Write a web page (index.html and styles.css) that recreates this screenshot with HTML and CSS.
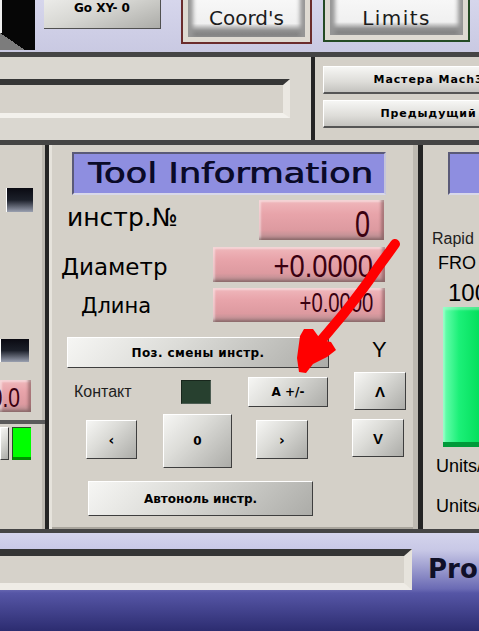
FILE: index.html
```html
<!DOCTYPE html>
<html lang="ru">
<head>
    <meta charset="UTF-8">
    <meta name="viewport" content="width=device-width, initial-scale=1.0">
    <title>Mach3 - Tool Information</title>
    <link rel="stylesheet" href="styles.css">
</head>
<body>

<div class="screen">
    <!-- verxnyaya polosa s knopkami -->
    <div class="top-strip">
        <div class="corner-btn"></div>
        <div class="go-btn">Go XY- 0</div>
        <div class="big-btn big-red">
            <div class="big-face"><span class="upper">Machine</span><span>Coord's</span></div>
        </div>
        <div class="big-btn big-green">
            <div class="big-face"><span class="upper">Soft</span><span class="wide">Limits</span></div>
        </div>
    </div>
    <div class="hbar"></div>

    <div class="mid-strip">
        <div class="mid-left"><div class="inset-field"></div></div>
        <div class="vbar"></div>
        <div class="mid-right">
            <div class="wiz-btn">Мастера Mach3</div>
            <div class="wiz-btn">Предыдущий</div>
        </div>
    </div>
    <div class="hbar"></div>

    <div class="main-row">
        <div class="side-left">
            <div class="side-left-top">
                <div class="led-black led-a"></div>
                <div class="led-black led-b"></div>
                <div class="dro dro-side"><span>0.0</span></div>
            </div>
            <div class="side-left-bottom">
                <div class="btn stub-btn"></div>
                <div class="led-green"></div>
            </div>
        </div>
        <div class="vbar"></div>

        <div class="tool-panel">
            <div class="title-box"><span>Tool Information</span></div>

            <div class="row row-1">
                <div class="lbl lbl-1">инстр.№</div>
                <div class="dro dro-1"><span>0</span></div>
            </div>
            <div class="row row-2">
                <div class="lbl lbl-2">Диаметр</div>
                <div class="dro dro-2"><span>+0.0000</span></div>
            </div>
            <div class="row row-3">
                <div class="lbl lbl-3">Длина</div>
                <div class="dro dro-3"><span>+0.0000</span></div>
            </div>

            <div class="row row-4">
                <div class="btn btn-pos">Поз. смены инстр.</div>
                <div class="axis-y">Y</div>
            </div>
            <div class="row row-5">
                <div class="contact-lbl">Контакт</div>
                <div class="led-contact"></div>
                <div class="btn btn-sign">A +/-</div>
                <div class="btn btn-up">Λ</div>
            </div>
            <div class="row row-6">
                <div class="btn btn-left">‹</div>
                <div class="btn btn-zero">0</div>
                <div class="btn btn-right">›</div>
                <div class="btn btn-down">V</div>
            </div>
            <div class="row row-7">
                <div class="btn btn-auto">Автоноль инстр.</div>
            </div>
        </div>

        <div class="vbar vbar-wide"></div>
        <div class="side-right">
            <div class="title-box title-stub"></div>
            <div class="rapid">Rapid</div>
            <div class="fro">FRO</div>
            <div class="fro-val">100</div>
            <div class="fro-bar"></div>
            <div class="units units-1">Units/</div>
            <div class="units units-2">Units/</div>
        </div>
    </div>
    <div class="hbar hbar-thin"></div>

    <div class="bottom">
        <div class="status-field"></div>
        <div class="pro">Pro</div>
    </div>

    <!-- krasnaya strelka poverx vsego -->
    <svg class="arrow" width="479" height="631" viewBox="0 0 479 631">
        <path d="M395 244 C388 254 380 264 372 276 C364 288 355 299 345 312 C337 322 329 331 318 344" fill="none" stroke="#ff0000" stroke-width="10" stroke-linecap="round"/>
        <polygon points="300,336 304,329 313,329 321,340 331,342 336,350 327,357 313,364 306,373 299,372 297,358" fill="#ff0000"/>
    </svg>
</div>

</body>
</html>
```

FILE: styles.css
```css
/* Obshchee */
* {
    box-sizing: border-box;
}
body {
    margin: 0;
    background-color: #d4d0c8;
    font-family: "DejaVu Sans", Verdana, sans-serif;
    color: #000;
    overflow: hidden;
}
.screen {
    position: relative;
    width: 479px;
    height: 631px;
    overflow: hidden;
}

/* Verxnyaya polosa */
.top-strip {
    display: flex;
    align-items: flex-start;
    height: 52px;
    overflow: hidden;
    background: linear-gradient(#d6d6ec, #c9c9e2);
}
.corner-btn {
    position: relative;
    width: 35px;
    height: 50px;
    margin-right: 9px;
    background-color: #060606;
}
.corner-btn::before {
    content: "";
    position: absolute;
    left: 0;
    top: 0;
    width: 2px;
    height: 33px;
    background-color: #eeeeee;
}
.corner-btn::after {
    content: "";
    position: absolute;
    left: 0;
    bottom: 0;
    width: 25px;
    height: 17px;
    background: linear-gradient(to top right, #7c7c7c 50%, transparent 50%);
}
.go-btn {
    width: 117px;
    height: 42px;
    margin-top: -13px;
    display: flex;
    align-items: center;
    justify-content: center;
    font-size: 12px;
    font-weight: bold;
    background: linear-gradient(160deg, #f4f4f2, #d8d8d4 50%, #acaca8);
    border-right: 1px solid #505050;
    border-bottom: 1px solid #505050;
}
.big-btn {
    height: 74px;
    margin-top: -30px;
    padding: 4px 5px 5px;
    background-color: #dedad2;
    border: 2px solid #6b2c2c;
}
.big-red {
    width: 131px;
    margin-left: 20px;
}
.big-green {
    width: 147px;
    height: 72px;
    margin-left: 11px;
    border-color: #244a24;
}
.big-face {
    height: 100%;
    padding-top: 4px;
    display: flex;
    flex-direction: column;
    align-items: center;
    font-size: 20px;
    line-height: 23px;
    color: #1c1c1c;
    background: linear-gradient(#b8b8b8, #f8f8f8 35%, #f0f0f0 78%, #949494 89%, #747474);
    box-shadow: inset 5px 0 4px #969696, inset -5px 0 4px #969696;
}
.big-face .upper {
    margin-bottom: 4px;
    color: #606060;
}
.big-face .wide {
    letter-spacing: 1.4px;
}
.hbar {
    height: 5px;
    background-color: #454545;
}
.hbar-thin {
    height: 4px;
}

/* Srednyaya polosa */
.mid-strip {
    display: flex;
    height: 83px;
}
.mid-left {
    width: 311px;
    padding-top: 22px;
    background-color: #dad7d0;
}
.inset-field {
    width: 290px;
    height: 39px;
    background-color: #d6d2ca;
    border-top: 6px solid #363636;
    border-right: 7px solid #ebe8e2;
    border-bottom: 5px solid #f3f1ec;
}
.vbar {
    width: 4px;
    background-color: #242424;
}
.vbar-wide {
    width: 5px;
}
.mid-right {
    flex: 1;
    padding: 9px 0 0 8px;
    display: flex;
    flex-direction: column;
    gap: 6px;
    overflow: hidden;
}
.wiz-btn {
    flex: none;
    width: 210px;
    height: 28px;
    display: flex;
    align-items: center;
    justify-content: center;
    font-size: 11px;
    font-weight: bold;
    letter-spacing: 0.9px;
    background: linear-gradient(#f6f6f4, #dddcd8 60%, #c4c3bf);
    border-top: 1px solid #ffffff;
    border-left: 1px solid #ffffff;
    border-bottom: 2px solid #555555;
}

/* Osnovnaya chast' */
.main-row {
    display: flex;
    height: 384px;
}
.side-left {
    width: 45px;
    display: flex;
    flex-direction: column;
    box-shadow: inset -3px 0 #bdb9b1;
}
.side-left-top {
    height: 275px;
    padding-top: 43px;
}
.led-black {
    border-left: 1px solid #ffffff;
    background: linear-gradient(#0a0a12, #1c202a 50%, #9aa0b0);
}
.led-a {
    width: 27px;
    height: 24px;
    margin-left: 6px;
}
.led-b {
    width: 29px;
    height: 23px;
    margin-top: 127px;
}
.side-left-bottom {
    flex: 1;
    display: flex;
    align-items: flex-start;
    gap: 3px;
    padding-top: 3px;
    border-top: 4px solid #5a5a5a;
}
.stub-btn {
    width: 9px;
    height: 33px;
}
.led-green {
    width: 19px;
    height: 33px;
    background-color: #00ff00;
    border-top: 1px solid #2a4a2a;
    border-left: 1px solid #2a4a2a;
    border-bottom: 3px solid #009000;
}

/* Krasnye polya */
.dro {
    display: flex;
    justify-content: flex-end;
    align-items: flex-start;
    overflow: hidden;
    font-family: "Liberation Sans", Arial, sans-serif;
    color: #3a0010;
    background: linear-gradient(#f0b8bc, #e8a4aa 35%, #dd9aa0 75%, #b08c8e);
    box-shadow: inset -3px -2px 3px rgba(90, 60, 60, 0.45), inset 2px 2px 2px rgba(255, 255, 255, 0.45);
}
.dro span {
    display: inline-block;
    white-space: nowrap;
    transform-origin: right center;
}
.dro-side {
    width: 31px;
    height: 32px;
    margin-top: 18px;
    padding: 4px 11px 0 0;
    font-size: 28px;
    line-height: 28px;
}
.dro-side span {
    transform: scaleX(0.75);
}

/* Panel' instrumenta */
.tool-panel {
    width: 369px;
    padding-top: 7px;
    background-color: #d4d0c8;
    box-shadow: inset 3px 0 #e6e3dc, inset -5px 0 #bdb9b1, inset 0 -2px #a9a59d;
}
.title-box {
    width: 314px;
    height: 43px;
    margin-left: 23px;
    padding: 5px 0 0 14px;
    background-color: #8e8ee0;
    border: 2px solid;
    border-color: #5a5a78 #c4c4da #d8d8ea #5a5a78;
    overflow: hidden;
}
.title-box span {
    display: inline-block;
    font-size: 29px;
    line-height: 29px;
    color: #0a0a28;
    text-shadow: 0.7px 0 0 #0a0a28;
    transform: scaleX(1.22);
    transform-origin: left center;
    white-space: nowrap;
}
.row {
    display: flex;
    align-items: flex-start;
}
.row-1 { height: 46px; margin-top: 2px; }
.row-2 { height: 43px; }
.row-3 { height: 39px; }
.row-4 { height: 47px; }
.row-5 { height: 42px; }
.row-6 { height: 62px; }
.row-7 { height: 53px; }

.lbl {
    white-space: nowrap;
}
.lbl-1 {
    margin: 6px 0 0 18px;
    font-size: 25px;
    line-height: 30px;
}
.lbl-2 {
    margin: 10px 0 0 12px;
    font-size: 23px;
    line-height: 28px;
}
.lbl-3 {
    margin: 7px 0 0 32px;
    font-size: 21px;
    line-height: 26px;
}
.dro-1 {
    width: 125px;
    height: 40px;
    margin: 3px 34px 0 auto;
    padding: 7px 14px 0 0;
    font-size: 36px;
    line-height: 36px;
}
.dro-1 span {
    transform: scaleX(0.75);
}
.dro-2 {
    width: 172px;
    height: 35px;
    margin: 4px 33px 0 auto;
    padding: 4px 12px 0 0;
    font-size: 31px;
    line-height: 31px;
}
.dro-2 span {
    transform: scaleX(0.88);
}
.dro-3 {
    width: 172px;
    height: 34px;
    margin: 2px 33px 0 auto;
    padding: 2px 12px 0 0;
    font-size: 27px;
    line-height: 27px;
}
.dro-3 span {
    transform: scaleX(0.75);
}

/* Serye knopki */
.btn {
    display: flex;
    align-items: center;
    justify-content: center;
    font-size: 12px;
    font-weight: bold;
    white-space: nowrap;
    background: linear-gradient(135deg, #f6f6f4, #dcdcd8 40%, #acaca8);
    border-top: 1px solid #ffffff;
    border-left: 1px solid #ffffff;
    border-right: 1px solid #3e3e3e;
    border-bottom: 1px solid #3e3e3e;
}
.btn-pos {
    width: 262px;
    height: 31px;
    margin: 12px 0 0 18px;
    letter-spacing: 0.4px;
}
.axis-y {
    margin: 14px 0 0 43px;
    font-family: "Liberation Sans", Arial, sans-serif;
    font-size: 22px;
    line-height: 22px;
}
.contact-lbl {
    width: 107px;
    margin: 12px 0 0 25px;
    font-family: "Liberation Sans", Arial, sans-serif;
    font-size: 16px;
    line-height: 16px;
    color: #1e1e1e;
}
.led-contact {
    width: 30px;
    height: 24px;
    margin-top: 8px;
    background-color: #27402f;
    border: 1px solid;
    border-color: #18261c #4c5c52 #4c5c52 #18261c;
}
.btn-sign {
    width: 80px;
    height: 30px;
    margin: 5px 0 0 37px;
}
.btn-up,
.btn-down {
    font-family: "Liberation Sans", Arial, sans-serif;
    font-size: 15px;
}
.btn-up {
    width: 52px;
    height: 38px;
    margin-left: 26px;
}
.btn-left {
    width: 51px;
    height: 39px;
    margin: 6px 0 0 37px;
    font-size: 14px;
}
.btn-zero {
    width: 69px;
    height: 54px;
    margin-left: 26px;
}
.btn-right {
    width: 52px;
    height: 39px;
    margin: 6px 0 0 24px;
    font-size: 14px;
}
.btn-down {
    width: 52px;
    height: 38px;
    margin: 5px 0 0 44px;
}
.btn-auto {
    width: 225px;
    height: 35px;
    margin: 5px 0 0 39px;
}

/* Pravaya kolonka */
.side-right {
    flex: 1;
    overflow: hidden;
    font-family: "Liberation Sans", Arial, sans-serif;
    white-space: nowrap;
}
.title-stub {
    width: 40px;
    margin: 7px 0 0 25px;
}
.rapid {
    margin: 36px 0 0 9px;
    font-size: 16px;
    line-height: 16px;
    color: #1e1e1e;
}
.fro {
    margin: 7px 0 0 15px;
    font-size: 18px;
    line-height: 18px;
}
.fro-val {
    margin: 9px 0 0 25px;
    font-size: 24px;
    line-height: 24px;
}
.fro-bar {
    width: 40px;
    height: 140px;
    margin: 2px 0 0 20px;
    background: linear-gradient(to right, #6effb2, #1cf078 40%, #00dc58);
    box-shadow: inset 0 -5px #009a3a, inset 2px 3px 2px rgba(255, 255, 255, 0.3);
}
.units {
    margin-left: 13px;
    font-size: 18px;
    line-height: 18px;
}
.units-1 { margin-top: 10px; }
.units-2 { margin-top: 22px; }

/* Nizhnyaya polosa */
.bottom {
    display: flex;
    align-items: flex-start;
    height: 98px;
    background: linear-gradient(#d4d4ec 0, #c8c8e6 17px, #6a6ab4 56px, #5656a6 60px, #2c2c70 98px);
}
.status-field {
    width: 412px;
    height: 41px;
    margin-top: 16px;
    background-color: #d6d2ca;
    border-top: 7px solid #353535;
    border-right: 8px solid #e6e3dc;
    border-bottom: 7px solid #efece6;
}
.pro {
    margin: 23px 0 0 16px;
    font-size: 26px;
    line-height: 26px;
    font-weight: bold;
    color: #101028;
}

/* Strelka */
.arrow {
    position: absolute;
    left: 0;
    top: 0;
    pointer-events: none;
}
```
